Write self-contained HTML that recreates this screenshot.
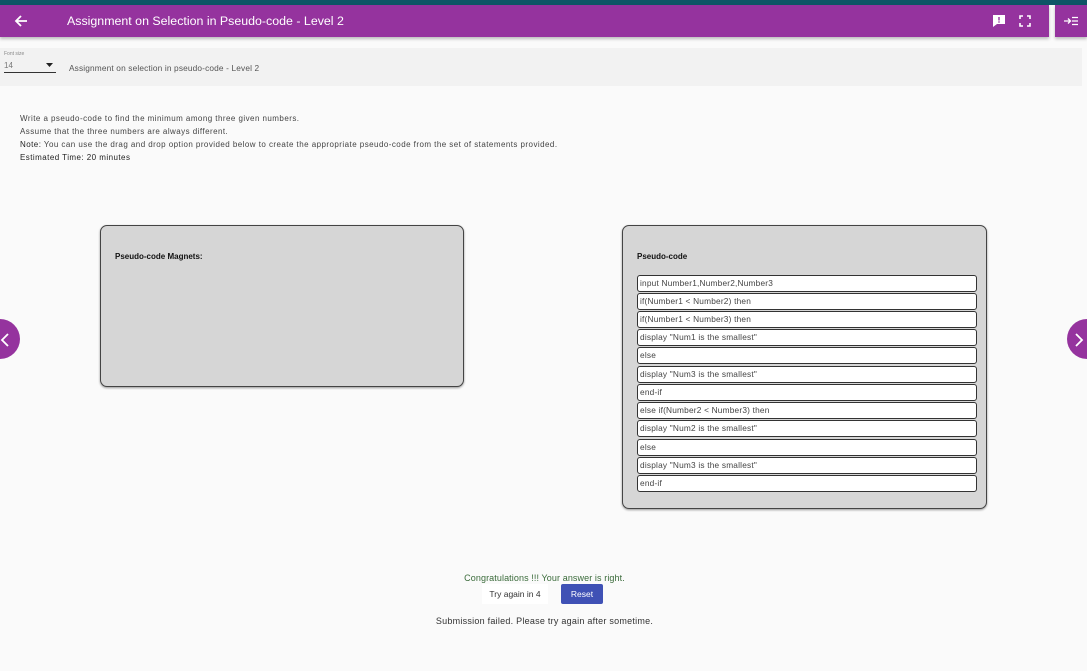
<!DOCTYPE html>
<html><head><meta charset="utf-8"><style>
*{box-sizing:border-box;margin:0;padding:0}
body{width:1087px;height:671px;overflow:hidden;background:#fafafa;font-family:"Liberation Sans",sans-serif;position:relative;color:#333}
.abs{position:absolute}
.top{left:0;top:0;width:1087px;height:5px;background:#0f5566}
.hdr{left:0;top:5px;width:1049px;height:32px;background:#95339e;box-shadow:0 2px 3px rgba(0,0,0,.25)}
.hdr2{left:1055px;top:5px;width:32px;height:32px;background:#95339e;box-shadow:0 2px 3px rgba(0,0,0,.25)}
.title{left:67px;top:14px;color:#fff;font-size:12.4px}
.bar{left:0;top:48px;width:1082px;height:38px;background:#f2f2f2}
.item{position:absolute;left:637px;width:340px;height:17px;background:#fff;border:1px solid #333;border-radius:3px;font-size:8.3px;letter-spacing:.2px;line-height:15px;padding-left:2px;color:#444}
.panel{background:#d6d6d6;border:1px solid #444;border-radius:7px;box-shadow:0 1px 2px rgba(0,0,0,.4)}
.circ{width:40px;height:40px;border-radius:50%;background:#95339e}
</style></head><body>
<div class="abs top"></div>
<div class="abs hdr"></div>
<div class="abs hdr2"></div>
<svg class="abs" style="left:14px;top:14px" width="14" height="14" viewBox="0 0 14 14"><path d="M13 7H2M7 2L2 7l5 5" stroke="#fff" stroke-width="1.8" fill="none"/></svg>
<div class="abs title">Assignment on Selection in Pseudo-code - Level 2</div>
<svg class="abs" style="left:992px;top:14px" width="14" height="14" viewBox="0 0 14 14"><path d="M1 1h12v9H5l-4 3z" fill="#fff"/><rect x="6.3" y="3" width="1.4" height="3.5" fill="#95339e"/><rect x="6.3" y="7.3" width="1.4" height="1.4" fill="#95339e"/></svg>
<svg class="abs" style="left:1019px;top:15px" width="12" height="12" viewBox="0 0 12 12"><path d="M1 4V1h3M8 1h3v3M11 8v3H8M4 11H1V8" stroke="#fff" stroke-width="1.6" fill="none"/></svg>
<svg class="abs" style="left:1064px;top:16px" width="14" height="10" viewBox="0 0 14 10"><path d="M0 5h6M4 2.5L6.5 5 4 7.5" stroke="#fff" stroke-width="1.3" fill="none"/><path d="M8 1.5h6M8 5h6M8 8.5h6" stroke="#fff" stroke-width="1.2"/></svg>
<div class="abs bar"></div>
<div class="abs" style="left:4px;top:51px;font-size:5px;color:#888">Font size</div>
<div class="abs" style="left:4px;top:61px;font-size:8px;color:#777">14</div>
<div class="abs" style="left:4px;top:72px;width:52px;height:1px;background:#333"></div>
<svg class="abs" style="left:46px;top:63px" width="7" height="4"><path d="M0 0h7L3.5 4z" fill="#222"/></svg>
<div class="abs" style="left:69px;top:63px;font-size:8.3px;letter-spacing:.15px;color:#555">Assignment on selection in pseudo-code - Level 2</div>
<div class="abs" style="left:20px;top:112px;font-size:8px;letter-spacing:.45px;line-height:13px;color:#444">
Write a pseudo-code to find the minimum among three given numbers.<br>
Assume that the three numbers are always different.<br>
<span style="color:#222">Note:</span> You can use the drag and drop option provided below to create the appropriate pseudo-code from the set of statements provided.<br>
<span style="color:#222">Estimated Time: 20 minutes</span></div>
<div class="abs panel" style="left:100px;top:225px;width:364px;height:162px"></div>
<div class="abs" style="left:115px;top:252px;font-size:8px;font-weight:bold;color:#111">Pseudo-code Magnets:</div>
<div class="abs panel" style="left:622px;top:225px;width:365px;height:284px"></div>
<div class="abs" style="left:637px;top:252px;font-size:8px;font-weight:bold;color:#111">Pseudo-code</div>
<div class="item" style="top:275px">input Number1,Number2,Number3</div>
<div class="item" style="top:293px">if(Number1 &lt; Number2) then</div>
<div class="item" style="top:311px">if(Number1 &lt; Number3) then</div>
<div class="item" style="top:329px">display "Num1 is the smallest"</div>
<div class="item" style="top:347px">else</div>
<div class="item" style="top:366px">display "Num3 is the smallest"</div>
<div class="item" style="top:384px">end-if</div>
<div class="item" style="top:402px">else if(Number2 &lt; Number3) then</div>
<div class="item" style="top:420px">display "Num2 is the smallest"</div>
<div class="item" style="top:439px">else</div>
<div class="item" style="top:457px">display "Num3 is the smallest"</div>
<div class="item" style="top:475px">end-if</div>
<div class="abs circ" style="left:-20px;top:319px"></div>
<svg class="abs" style="left:0;top:333px" width="10" height="14"><path d="M8 1L2 7l6 6" stroke="#fff" stroke-width="1.8" fill="none"/></svg>
<div class="abs circ" style="left:1067px;top:319px"></div>
<svg class="abs" style="left:1074px;top:333px" width="10" height="14"><path d="M2 1l6 6-6 6" stroke="#fff" stroke-width="1.8" fill="none"/></svg>
<div class="abs" style="left:0;width:1087px;top:573px;text-align:center;font-size:9px;letter-spacing:.1px;color:#3a6b3a;padding-left:2px">Congratulations !!! Your answer is right.</div>
<div class="abs" style="left:482px;top:584px;width:66px;height:20px;background:#fff;font-size:8.5px;line-height:20px;text-align:center;color:#333">Try again in 4</div>
<div class="abs" style="left:561px;top:584px;width:42px;height:20px;background:#3f51b5;border-radius:2px;font-size:8.5px;line-height:20px;text-align:center;color:#fff">Reset</div>
<div class="abs" style="left:0;width:1087px;top:616px;text-align:center;font-size:9px;letter-spacing:.25px;color:#333;padding-left:2px">Submission failed. Please try again after sometime.</div>
</body></html>
